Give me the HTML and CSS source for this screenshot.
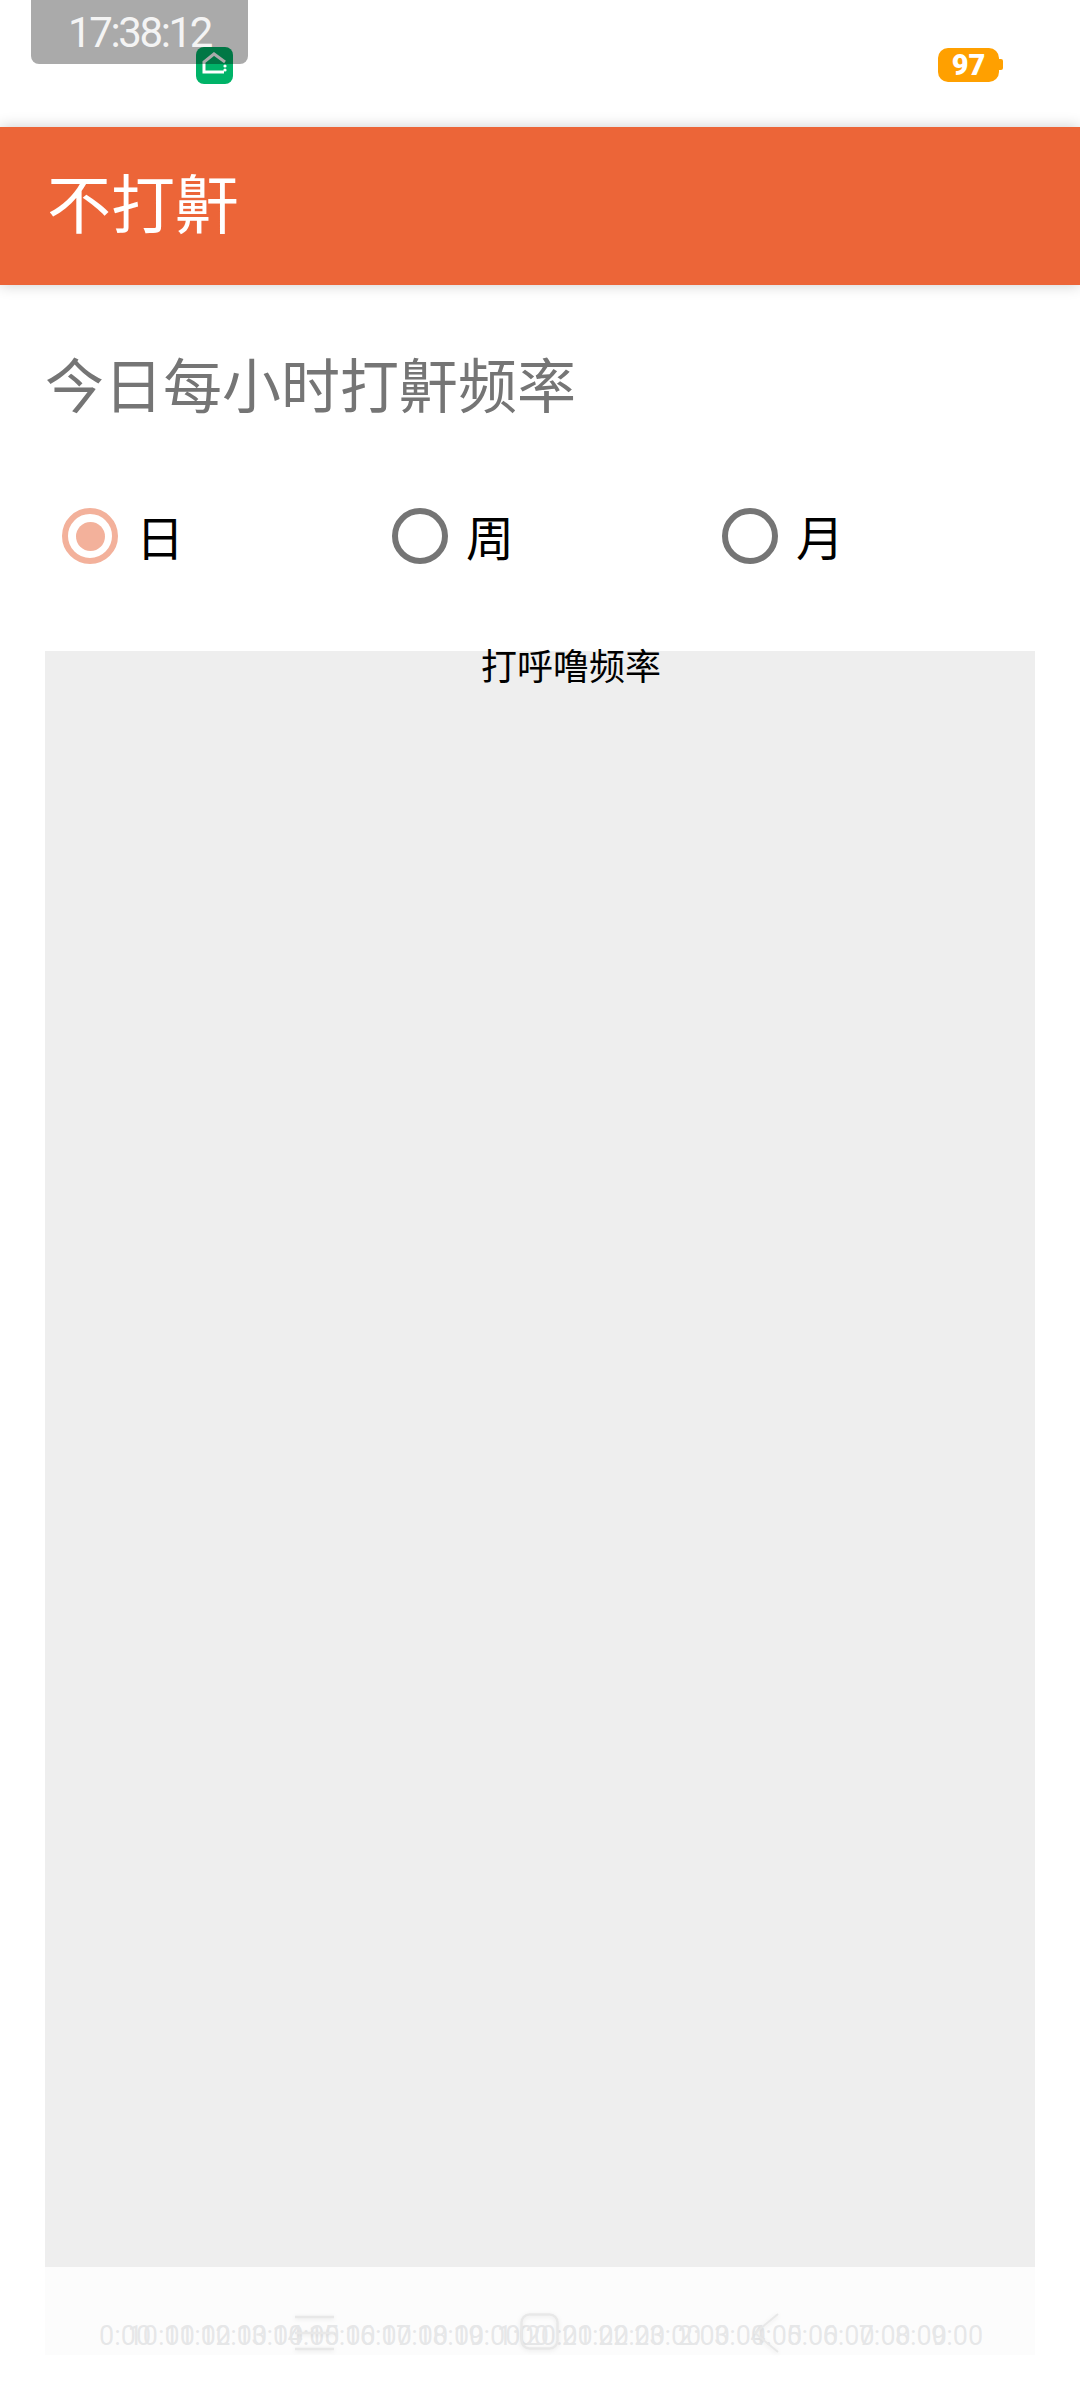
FILE: index.html
```html
<!DOCTYPE html>
<html lang="zh-CN">
<head>
<meta charset="utf-8">
<title>不打鼾</title>
<link rel="stylesheet" href="styles.css">
</head>
<body>
<div class="screen">
  <div class="status">
    <svg class="home-icon" viewBox="0 0 37 37" aria-hidden="true">
      <rect width="37" height="37" rx="8" fill="#00b368"/>
      <path d="M29 15 18 7 8 15V25H28" fill="none" stroke="#fff" stroke-width="3"/>
      <circle cx="29" cy="19" r="1.6" fill="#fff"/>
      <circle cx="29" cy="23" r="1.6" fill="#fff"/>
    </svg>
    <div class="battery">97</div>
    <div class="clock">17:38:12</div>
  </div>
  <header class="appbar">不打鼾</header>
  <main class="content">
    <h1 class="heading">今日每小时打鼾频率</h1>
    <div class="radios">
      <div class="radio-item"><span class="radio radio-on"></span><span class="radio-label">日</span></div>
      <div class="radio-item"><span class="radio"></span><span class="radio-label">周</span></div>
      <div class="radio-item"><span class="radio"></span><span class="radio-label">月</span></div>
    </div>
    <section class="chart">
      <div class="chart-title">打呼噜频率</div>
      <div class="axis">
        <span class="tick"><b>0:00</b></span><span class="tick"><b>10:00</b></span><span class="tick"><b>11:00</b></span><span class="tick"><b>12:00</b></span><span class="tick"><b>13:00</b></span><span class="tick"><b>14:00</b></span><span class="tick"><b>15:00</b></span><span class="tick"><b>16:00</b></span><span class="tick"><b>17:00</b></span><span class="tick"><b>18:00</b></span><span class="tick"><b>19:00</b></span><span class="tick"><b>1:00</b></span><span class="tick"><b>20:00</b></span><span class="tick"><b>21:00</b></span><span class="tick"><b>22:00</b></span><span class="tick"><b>23:00</b></span><span class="tick"><b>2:00</b></span><span class="tick"><b>3:00</b></span><span class="tick"><b>4:00</b></span><span class="tick"><b>5:00</b></span><span class="tick"><b>6:00</b></span><span class="tick"><b>7:00</b></span><span class="tick"><b>8:00</b></span><span class="tick"><b>9:00</b></span>
      </div>
    </section>
  </main>
  <nav class="navbar">
    <svg class="nav-menu" viewBox="0 0 39 36" aria-hidden="true">
      <path d="M0 2H39M0 18H39M0 34H39" fill="none" stroke="#e8e8e8" stroke-width="2.5"/>
    </svg>
    <svg class="nav-home" viewBox="0 0 39 37" aria-hidden="true">
      <rect x="1.5" y="1.5" width="36" height="34" rx="8" fill="none" stroke="#e8e8e8" stroke-width="2.5"/>
    </svg>
    <svg class="nav-back" viewBox="0 0 26 40" aria-hidden="true">
      <path d="M25 1 2 20 25 39" fill="none" stroke="#e8e8e8" stroke-width="2"/>
    </svg>
  </nav>
</div>
</body>
</html>
```

FILE: styles.css
```css
* {
  box-sizing: border-box;
}

html,
body {
  margin: 0;
  padding: 0;
  background: #fff;
}

.screen {
  position: relative;
  display: flex;
  flex-direction: column;
  width: 1080px;
  height: 2400px;
  overflow: hidden;
  font-family: "Noto Sans CJK SC", "Noto Sans", sans-serif;
  background: #fff;
}

.status {
  position: relative;
  display: flex;
  align-items: flex-start;
  flex: 0 0 127px;
  padding: 47px 81px 0 196px;
}

.home-icon {
  display: block;
  width: 37px;
  height: 37px;
}

.battery {
  position: relative;
  width: 61px;
  height: 34px;
  margin: 1px 0 0 auto;
  border-radius: 10px;
  background: #ffa000;
  color: #fff;
  font: 900 29px/34px Roboto, sans-serif;
  text-align: center;
}

.battery::after {
  content: "";
  position: absolute;
  top: 11px;
  right: -4px;
  width: 4px;
  height: 11px;
  border-radius: 0 2px 2px 0;
  background: #ffa000;
}

.clock {
  position: absolute;
  top: 0;
  left: 31px;
  width: 217px;
  height: 64px;
  border-radius: 0 0 8px 8px;
  background: rgba(0, 0, 0, 0.333);
  color: #f4f4f4;
  font: 400 42px/66px Roboto, sans-serif;
  letter-spacing: -2.4px;
  text-align: center;
}

.appbar {
  position: relative;
  flex: 0 0 158px;
  padding-left: 47px;
  background: #ec6538;
  box-shadow: 0 0 14px rgba(0, 0, 0, 0.2);
  color: #fff;
  font-size: 64px;
  font-weight: 400;
  line-height: 147px;
}

.content {
  display: flex;
  flex-direction: column;
  flex: 1;
  min-height: 0;
  padding: 0 45px 45px;
}

.heading {
  margin: 0;
  padding-top: 57px;
  color: #757575;
  font-size: 59px;
  font-weight: 400;
  line-height: 82px;
}

.radios {
  display: flex;
  margin-top: 84px;
  padding-left: 17px;
}

.radio-item {
  display: flex;
  align-items: center;
  flex: 0 0 330px;
  height: 56px;
}

.radio {
  display: flex;
  align-items: center;
  justify-content: center;
  width: 56px;
  height: 56px;
  border: 6px solid #757575;
  border-radius: 50%;
}

.radio-on {
  border-color: #f3b19b;
}

.radio-on::before {
  content: "";
  width: 29px;
  height: 29px;
  border-radius: 50%;
  background: #f3b19b;
}

.radio-label {
  margin-left: 18px;
  padding-bottom: 3px;
  color: #000;
  font-size: 48px;
  line-height: 56px;
}

.chart {
  display: flex;
  flex-direction: column;
  flex: 1;
  min-height: 0;
  margin-top: 87px;
  background: #eeeeee;
}

.chart-title {
  padding-left: 62px;
  color: #000;
  font-size: 36px;
  line-height: 26px;
  text-align: center;
}

.axis {
  display: flex;
  margin: auto 60px 4px 62px;
  color: #6e7079;
  font-size: 27px;
  font-family: Roboto, sans-serif;
  line-height: 30px;
}

.tick {
  display: flex;
  flex: 1 1 0;
  justify-content: center;
  min-width: 0;
}

.tick b {
  flex: none;
  font-weight: 400;
  white-space: nowrap;
}

.navbar {
  position: absolute;
  right: 0;
  bottom: 0;
  left: 0;
  display: flex;
  align-items: flex-start;
  height: 133px;
  padding: 46px 0 0 295px;
  background: rgba(255, 255, 255, 0.83);
}

.navbar svg {
  display: block;
  filter: drop-shadow(0 1px 2px rgba(0, 0, 0, 0.08));
}

.nav-menu {
  width: 39px;
  height: 36px;
  margin-top: 2px;
}

.nav-home {
  width: 39px;
  height: 37px;
  margin-left: 186px;
}

.nav-back {
  width: 26px;
  height: 40px;
  margin-left: 194px;
}
```
